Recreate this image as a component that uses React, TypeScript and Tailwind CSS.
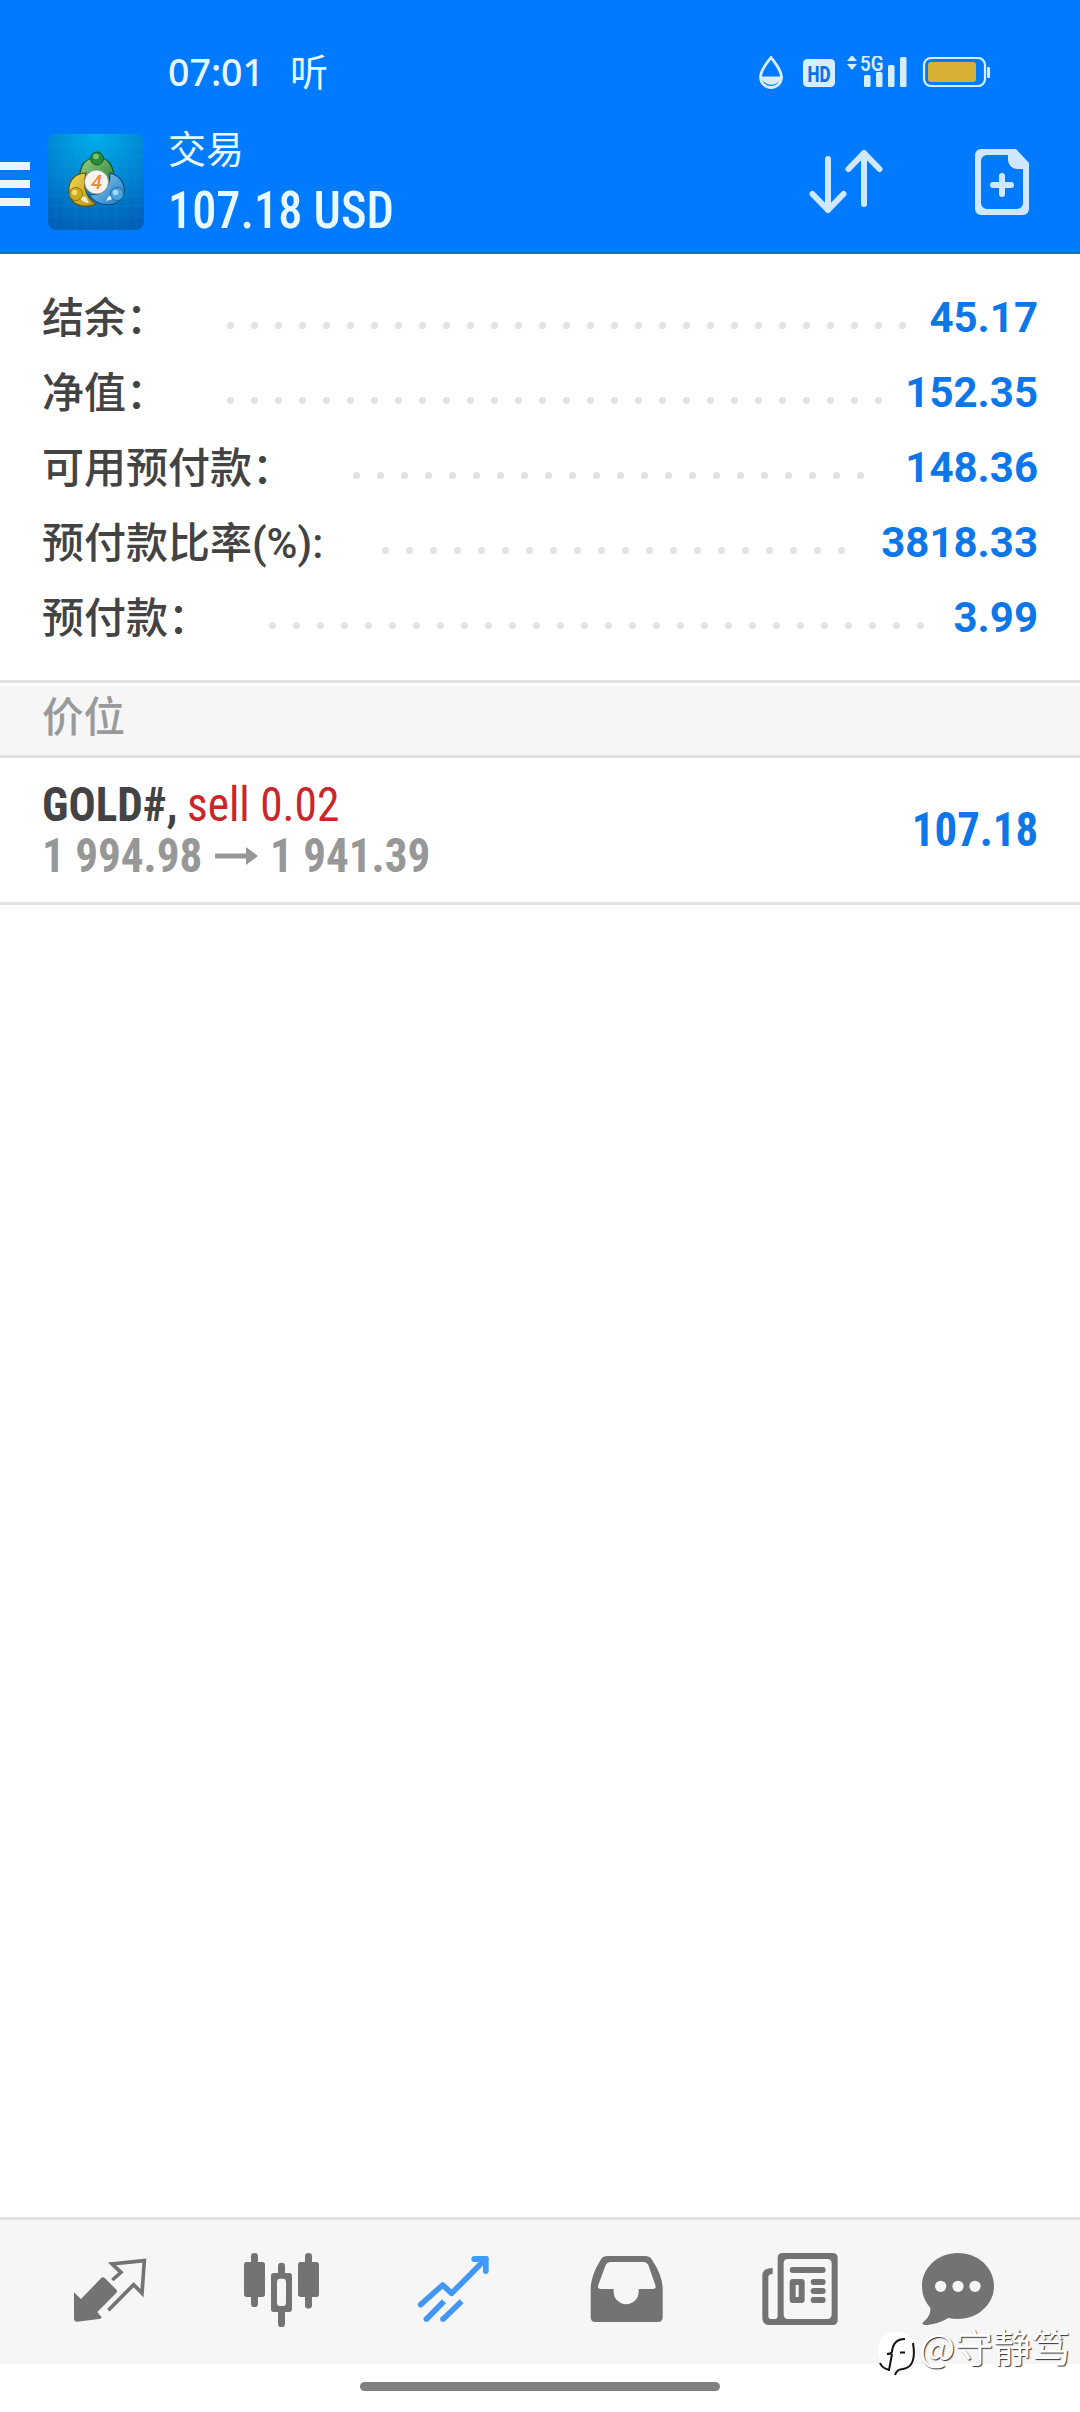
import React from 'react'

interface SummaryRow {
  label: string
  value: string
  dots: number
}

const summary: SummaryRow[] = [
  { label: '结余：', value: '45.17', dots: 29 },
  { label: '净值：', value: '152.35', dots: 28 },
  { label: '可用预付款：', value: '148.36', dots: 22 },
  { label: '预付款比率(%):', value: '3818.33', dots: 20 },
  { label: '预付款：', value: '3.99', dots: 28 },
]

const StatusBar: React.FC = () => (
  <div className="flex h-[114px] pt-14 text-[#e8f6ff]">
    <span className="ml-[168px] mt-[-4px] h-10 w-[93px] whitespace-nowrap font-['Noto_Sans'] text-[37.5px] font-medium leading-10">07:01</span>
    <span className="ml-[29px] mt-[-6px] h-11 w-[38px] font-['Noto_Sans_CJK_SC',sans-serif] text-[38px] leading-10">听</span>
    {/* Drop, HD badge, signal and battery */}
    <svg className="ml-[428px] h-9 w-[236px]" viewBox="756 56 236 36" fill="#d6eeff">
      <path d="M771 57.500C767 63 760.500 70 760.500 77a10.500 10.500 0 0 0 21 0C781.500 70 775 63 771 57.500z" fill="none" stroke="#d6eeff" strokeWidth="2.800" />
      <path d="M761 76.500h20.500a10.500 10.500 0 0 1-20.500 0z" />
      <rect x="803" y="59" width="32" height="28" rx="4.500" />
      <text x="819" y="81.500" textAnchor="middle" textLength="23" lengthAdjust="spacingAndGlyphs" fontFamily="Roboto, sans-serif" fontWeight="800" fontSize="22" fill="#0a72e6">HD</text>
      <path d="M852 55l5 6h-10zM852 70l5-6h-10z" />
      <text x="860" y="70.500" textLength="23.500" lengthAdjust="spacingAndGlyphs" fontFamily="Roboto, sans-serif" fontWeight="600" fontSize="21.500">5G</text>
      <rect x="864" y="75" width="6.500" height="12" rx="1.500" />
      <rect x="876" y="72" width="6.500" height="15" rx="1.500" />
      <rect x="888" y="65" width="6.500" height="22" rx="1.500" />
      <rect x="900" y="57" width="6.500" height="30" rx="1.500" />
      <rect x="924" y="58" width="61" height="28" rx="7" fill="none" stroke="#d6eeff" strokeWidth="2.200" />
      <rect x="928" y="62" width="48" height="20" rx="3" fill="#d7b135" />
      <rect x="987" y="67" width="3" height="11" rx="1" />
    </svg>
  </div>
)

const AppLogo: React.FC = () => (
  <svg className="h-24 w-24" viewBox="0 0 96 96">
    <defs>
      <radialGradient id="bg" cx=".5" cy="0" r="1">
        <stop offset="0" stopColor="#00b0ec" />
        <stop offset=".6" stopColor="#0081cf" />
        <stop offset="1" stopColor="#0061b8" />
      </radialGradient>
      <linearGradient id="green" x1="0" y1="0" x2="1" y2="1">
        <stop offset="0" stopColor="#9bd08a" />
        <stop offset="1" stopColor="#1f7a2a" />
      </linearGradient>
      <linearGradient id="yellow" x1="0" y1="0" x2="1" y2="1">
        <stop offset="0" stopColor="#f0dc55" />
        <stop offset="1" stopColor="#b98f10" />
      </linearGradient>
      <linearGradient id="blue" x1="0" y1="0" x2="1" y2="1">
        <stop offset="0" stopColor="#8fd2f4" />
        <stop offset="1" stopColor="#1c78c4" />
      </linearGradient>
    </defs>
    <rect width="96" height="96" rx="8" fill="url(#bg)" />
    <path d="M8 0v96M18 0v96M28 0v96M38 0v96M48 0v96M58 0v96M68 0v96M78 0v96M88 0v96M0 12h96M0 22h96M0 32h96M0 42h96M0 52h96M0 62h96M0 72h96M0 82h96" stroke="#35b4ee" strokeOpacity=".14" />
    <path d="M34 52C29 39 33 24 49 23c15 0 20 17 15 32-5-2-9-4-15-4-6-1-11-1-15 1z" fill="url(#green)" stroke="#12501f" strokeWidth="1.200" />
    <path d="M38 39c-13 0-20 11-16 23 3 10 15 13 26 8-7-4-10-11-11-16-1-6 0-10 1-15z" fill="url(#yellow)" stroke="#5e5210" strokeWidth="1.200" />
    <path d="M62 39c12 3 18 15 12 25-6 9-23 10-33-3 8 0 14-2 17-6 3-5 4-10 4-16z" fill="url(#blue)" stroke="#0d4a80" strokeWidth="1.200" />
    <path d="M32 62l6 1 3 6c-4 0-8-2-9-7zM66 61l-5 1-3 5c5-1 7-2 8-6z" fill="#e3f0e0" />
    <circle cx="49" cy="24.500" r="6.500" fill="#2c8b36" stroke="#145c20" />
    <circle cx="48" cy="22.500" r="2.800" fill="#7cc47c" />
    <circle cx="28" cy="60" r="6.500" fill="#d0a81c" stroke="#8b7410" />
    <circle cx="26.500" cy="58.500" r="2.800" fill="#f0dc6a" />
    <circle cx="69" cy="60" r="6.500" fill="#4ba4dc" stroke="#1c6aa8" />
    <circle cx="67.500" cy="58.500" r="2.800" fill="#a5dbf7" />
    <circle cx="48.500" cy="48" r="12" fill="#f6f4f1" stroke="#8a8f86" strokeWidth=".8" />
    <text x="48.500" y="55" textAnchor="middle" fontFamily="Roboto, sans-serif" fontStyle="italic" fontWeight="500" fontSize="20" fill="#ee8c3c">4</text>
  </svg>
)

const Header: React.FC = () => (
  <header className="h-[254px] border-b-2 border-[#0a6fdc] bg-[#007aff]">
    <StatusBar />
    <div className="flex h-[138px]">
      <div className="mt-12 flex w-[30px] flex-col gap-2.5">
        <div className="h-2 bg-[#e8f6ff]" />
        <div className="h-2 bg-[#e8f6ff]" />
        <div className="h-2 bg-[#e8f6ff]" />
      </div>
      <div className="ml-[18px] mt-5">
        <AppLogo />
      </div>
      <div className="ml-6 mt-[13px] w-[230px] text-[#e8f9ff]">
        <div className="h-10 font-['Noto_Sans_CJK_SC',sans-serif] text-[38px] leading-10">交易</div>
        <div className="mt-[14px] origin-left scale-x-[.93] whitespace-nowrap font-['Roboto'] text-[52px] font-medium leading-[60px] [font-stretch:75%]">107.18 USD</div>
      </div>
      <svg className="ml-[408px] mt-8 h-[72px] w-[84px]" viewBox="806 146 84 72" fill="none" stroke="#cfe8ff" strokeWidth="6" strokeLinecap="round" strokeLinejoin="round">
        <path d="M828 159v51M812.500 194l15.500 16 15.500-16M864 204v-51M848.500 169l15.500-16 15.500 16" />
      </svg>
      <svg className="ml-[82px] mt-8 h-[72px] w-[60px]" viewBox="972 146 60 72" fill="#cfe8ff">
        <path fillRule="evenodd" d="M981 149h35l13 14v46a6 6 0 0 1-6 6h-42a6 6 0 0 1-6-6v-54a6 6 0 0 1 6-6zM987 155a6 6 0 0 0-6 6v42a6 6 0 0 0 6 6h30a6 6 0 0 0 6-6v-34h-6a9 9 0 0 1-9-9v-5z" />
        <path d="M1002 176v18M993 185h18" stroke="#cfe8ff" strokeWidth="6" strokeLinecap="round" />
      </svg>
    </div>
  </header>
)

const Summary: React.FC = () => (
  <div className="px-[42px] pb-[25px] pt-[26px]">
    {summary.map(row => (
      <div key={row.label} className="flex h-[75px] items-center">
        <span className="mt-0.5 whitespace-nowrap font-['Roboto','Noto_Sans_CJK_SC',sans-serif] text-[42px] font-medium leading-none text-[#434343]">
          {row.label}
        </span>
        <div className="ml-[59px] mt-[15px] flex gap-[17px]">
          {Array.from({ length: row.dots }, (_, i) => (
            <div key={i} className="size-[7px] rounded-full bg-[#e2e2e2]" />
          ))}
        </div>
        <span className="ml-auto font-['Roboto'] text-[42px] font-bold leading-none text-[#0d77e9]">{row.value}</span>
      </div>
    ))}
  </div>
)

const Position: React.FC = () => (
  <div className="flex h-[147px] items-center justify-between border-b-[3px] border-[#e2e2e2] px-[42px] font-['Roboto'] text-[48px] [font-stretch:75%]">
    <div className="leading-[51px]">
      <div className="flex whitespace-nowrap">
        <span className="w-[145px] origin-left scale-x-[.94] font-bold text-[#434343]">GOLD#,</span>
        <span className="origin-left scale-x-[.945] text-[#c9262c]">sell 0.02</span>
      </div>
      <div className="flex items-center font-bold text-[#979797]">
        <span className="w-[173px] origin-left scale-x-[.94] whitespace-nowrap">1 994.98</span>
        <svg className="h-[18px] w-[43px]" viewBox="0 0 43 18" fill="#979797">
          <path d="M0 6.500h31V0l12 9-12 9v-6.500H0z" />
        </svg>
        <span className="ml-3 origin-left scale-x-[.94] whitespace-nowrap">1 941.39</span>
      </div>
    </div>
    <span className="origin-right scale-x-[.935] font-bold text-[#0d77e9]">107.18</span>
  </div>
)

const TabBar: React.FC = () => (
  <nav className="flex h-[147px] border-t-[3px] border-[#e2e2e2] bg-[#f6f6f6] pl-[70px] pt-[30px]">
    {/* Quotes */}
    <svg className="size-20" viewBox="30 30 240 240" fill="#737373">
      <path d="M42 157l21 20 60-62q6-6 12 0l33 33q6 6 0 12l-56 56 13 16-3 4-70 9q-10 0-10-9z" />
      <path d="M157 120l26-23-27-25 97-10-7 98-25-26-76 77" fill="none" stroke="#737373" strokeWidth="11" />
    </svg>
    {/* Charts */}
    <svg className="ml-[92px] size-20" viewBox="546 30 240 240" fill="#737373">
      <rect x="573" y="39" width="21" height="162" rx="10" />
      <rect x="552" y="66" width="63" height="105" rx="8" />
      <rect x="735" y="39" width="21" height="167" rx="10" />
      <rect x="714" y="66" width="63" height="105" rx="8" />
      <rect x="654" y="68" width="21" height="193" rx="10" />
      <rect x="633" y="99" width="63" height="117" rx="8" />
      <rect x="651" y="116" width="27" height="82" rx="10" fill="#f6f6f6" />
    </svg>
    {/* Trade, the active tab */}
    <svg className="ml-[92px] size-20" viewBox="1062 30 240 240" fill="none" stroke="#4296f5" strokeWidth="17">
      <path d="M1082 194l66-59 27 25 102-103" strokeLinejoin="round" strokeLinecap="round" />
      <path d="M1152 184l-53 54M1205 184l-56 54" />
      <path d="M1099 237v.1M1149 237v.1" strokeLinecap="round" />
      <path d="M1234 57q0-9 10-9h35q7 0 7 7v38q0 9-9 9-8 0-8-9V76l-9-10h-17q-9 0-9-9z" fill="#3b9bff" stroke="none" />
    </svg>
    {/* History */}
    <svg className="ml-[93px] size-20" viewBox="21 30 240 240" fill="#737373">
      <path fillRule="evenodd" d="M83 48h112q14 0 20 10 30 44 33 84v90q0 14-14 14H46q-14 0-14-14v-90q3-40 31-84 6-10 20-10zM91 66q-9 0-14 9l-22 60q-4 12 8 12h38v8a37 37 0 0 0 75 0v-8h42q12 0 8-12l-21-60q-5-9-14-9z" />
    </svg>
    {/* News */}
    <svg className="ml-[93px] size-20" viewBox="540 30 240 240" fill="#737373">
      <path fillRule="evenodd" d="M608 39h150q15 0 15 15v186q0 15-15 15H569q-22 0-22-22V106q0-22 31-22v18q-13 0-13 9v116q0 10 9 10h11q8 0 8-9V54q0-15 15-15zM624 57q-13 0-13 13v153q0 14 13 14h117q14 0 14-14V70q0-13-14-13z" />
      <rect x="629" y="81" width="108" height="18" rx="9" />
      <path fillRule="evenodd" d="M638 117h27q9 0 9 9v54q0 9-9 9h-27q-9 0-9-9v-54q0-9 9-9zM647 135v36h9v-36z" />
      <rect x="692" y="117" width="45" height="18" rx="9" />
      <rect x="692" y="144" width="45" height="18" rx="9" />
      <rect x="692" y="171" width="45" height="18" rx="9" />
    </svg>
    {/* Chat */}
    <svg className="ml-[78px] size-20" viewBox="1014 30 240 240" fill="#737373">
      <path d="M1134 39c60 0 108 44 108 99s-48 99-108 99q-16 0-30-3c-22 14-48 21-70 21q-12-2-4-9c16-12 22-26 21-43-15-16-25-38-25-65 0-55 48-99 108-99z" />
      <g fill="#f6f6f6">
        <circle cx="1082" cy="139" r="17" />
        <circle cx="1134" cy="139" r="17" />
        <circle cx="1185" cy="139" r="17" />
      </g>
    </svg>
  </nav>
)

const Watermark: React.FC = () => (
  <div className="absolute bottom-[34px] right-[10px] flex items-start gap-[2px]">
    <svg className="h-[48px] w-[40px]" viewBox="0 0 40 48">
      <path d="M20 2C32 2 38 10 38 21S32 39 26 39q-4 1-6 5-1-4-3-5C8 39 1 32 1 21S8 2 20 2z" fill="#fff" />
      <path d="M10 24q4 0 5-2 1-13 13-13M15 24l-3 16q-7-2-9-7M36 13q4 24-10 26-6 0-8 6" fill="none" stroke="#111" strokeWidth="2" />
      <path d="M23 22.500h5" stroke="#111" strokeWidth="2" />
    </svg>
    <span className="mt-[-8px] whitespace-nowrap font-['Noto_Sans_CJK_SC',sans-serif] text-[38.3px] leading-[48px] text-white [text-shadow:1px_1px_1px_#333]">
      @守静笃
    </span>
  </div>
)

const App: React.FC = () => {
  return (
    <div className="relative flex h-[2412px] w-[1080px] flex-col overflow-hidden bg-white">
      <Header />
      <Summary />
      <div className="border-y-[3px] border-[#e2e2e2] pt-[3px]">
        <div className="h-[69px] bg-[#f6f6f6] pl-[42px] font-['Noto_Sans_CJK_SC',sans-serif] text-[41.5px] font-medium leading-[56px] text-[#9a9a9c]">
          价位
        </div>
      </div>
      <Position />
      <div className="flex-1" />
      <TabBar />
      <div className="flex h-12 justify-center pt-[18px]">
        <div className="h-[9px] w-[360px] rounded-full bg-[#808080]" />
      </div>
      <Watermark />
    </div>
  )
}

export default App
